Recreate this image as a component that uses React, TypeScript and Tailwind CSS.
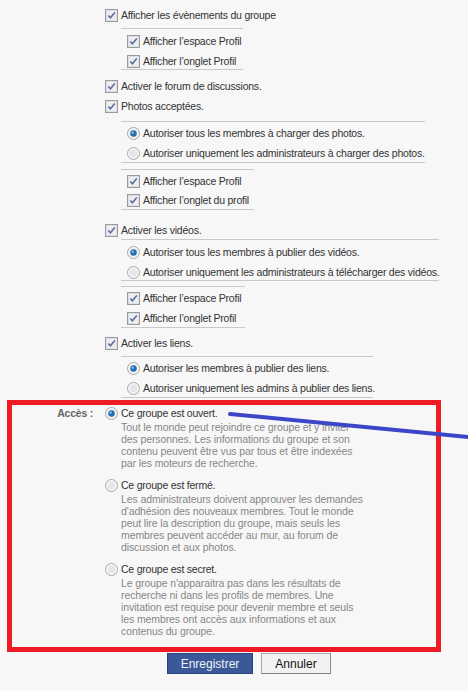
import React from 'react';

function Check() {
  return (
    <svg width="13" height="13" viewBox="0 0 13 13" className="shrink-0">
      <rect x="0.5" y="0.5" width="12" height="12" fill="#ffffff" stroke="#9a9b9c" />
      <rect x="1.5" y="1.5" width="10" height="10" fill="#eceef2" stroke="#dcdee3" />
      <path d="M3.3 6.5 L5.4 8.8 L9.8 3.5" fill="none" stroke="#5a6b96" strokeWidth="1.5" />
    </svg>
  );
}

function Radio({ on }: { on?: boolean }) {
  return (
    <svg width="13" height="13" viewBox="0 0 13 13" className="shrink-0">
      <circle cx="6.5" cy="6.5" r="6" fill="#f2f2f2" stroke="#a8a8a8" />
      <circle cx="6.5" cy="6.5" r="4.6" fill="#e6e6e6" stroke="#fbfbfb" strokeWidth="0.8" />
      {on && <circle cx="6.5" cy="6.5" r="3.2" fill="#2470b3" />}
      {on && <circle cx="5.7" cy="5.7" r="1.1" fill="#95ccf2" />}
    </svg>
  );
}

function Row({ radio, on, label, pad }: { radio?: boolean; on?: boolean; label: string; pad?: boolean }) {
  return (
    <div className={pad ? 'flex items-center gap-[3px] h-[16px] pl-[6px] pt-[1px]' : 'flex items-center gap-[3px] h-[16px] pt-[1px]'}>
      {radio ? <Radio on={on} /> : <Check />}
      <span className="whitespace-nowrap">{label}</span>
    </div>
  );
}

function Option({ on, title, lines, className }: { on?: boolean; title: string; lines: string[]; className?: string }) {
  return (
    <div className={className}>
      <div className="flex items-center gap-[3px] h-[16px] pt-[1px]">
        <Radio on={on} />
        <span className="whitespace-nowrap text-[#333333]">{title}</span>
      </div>
      <div className="pl-[16px] leading-[12px] text-[#878787] whitespace-nowrap tracking-[-0.1px]">
        {lines.map((l) => (
          <div key={l}>{l}</div>
        ))}
      </div>
    </div>
  );
}

export default function App() {
  return (
    <div className="relative w-[468px] h-[691px] bg-[#f7f7f7] overflow-hidden font-['Liberation_Sans',Arial,sans-serif] text-[10.5px] tracking-[-0.22px] text-[#333333]">
      <div className="pt-[7px]">
        <div className="pl-[105px] flex flex-col">
          <Row label="Afficher les évènements du groupe" />
          <div className="mt-[5px] ml-4 w-[122px] border-y border-[#c9c9c9] pt-[4px] flex flex-col gap-[4px]">
            <Row pad label="Afficher l’espace Profil" />
            <Row pad label="Afficher l’onglet Profil" />
          </div>
          <div className="mt-[8px]">
            <Row label="Activer le forum de discussions." />
          </div>
          <div className="mt-[4px]">
            <Row label="Photos acceptées." />
          </div>
          <div className="mt-[7px] ml-4 w-[304px] border-y border-[#c9c9c9] pt-[3px] pb-[1px] flex flex-col gap-[4px]">
            <Row pad radio on label="Autoriser tous les membres à charger des photos." />
            <Row pad radio label="Autoriser uniquement les administrateurs à charger des photos." />
          </div>
          <div className="mt-[6px] ml-4 w-[133px] border-y border-[#c9c9c9] pt-[3px] pb-[1px] flex flex-col gap-[3px]">
            <Row pad label="Afficher l’espace Profil" />
            <Row pad label="Afficher l’onglet du profil" />
          </div>
          <div className="mt-[12px]">
            <Row label="Activer les vidéos." />
          </div>
          <div className="mt-[1px] ml-4 w-[318px] border-y border-[#c9c9c9] pt-[4px] flex flex-col gap-[4px]">
            <Row pad radio on label="Autoriser tous les membres à publier des vidéos." />
            <Row pad radio label="Autoriser uniquement les administrateurs à télécharger des vidéos." />
          </div>
          <div className="mt-[5px] ml-4 w-[124px] border-y border-[#c9c9c9] pt-[3px] pb-[1px] flex flex-col gap-[4px]">
            <Row pad label="Afficher l’espace Profil" />
            <Row pad label="Afficher l’onglet Profil" />
          </div>
          <div className="mt-[7px]">
            <Row label="Activer les liens." />
          </div>
          <div className="mt-[5px] ml-4 w-[252px] border-y border-[#c9c9c9] pt-[3px] pb-[1px] flex flex-col gap-[4px]">
            <Row pad radio on label="Autoriser les membres à publier des liens." />
            <Row pad radio label="Autoriser uniquement les admins à publier des liens." />
          </div>
        </div>

        <div className="mt-[2px] ml-[7px] w-[434px] border-[5px] border-[#ed1c24] pb-[10px] flex">
          <div className="w-[81px] h-[16px] pt-[1px] flex items-center justify-end font-bold text-[#666666] whitespace-nowrap">
            Accès :
          </div>
          <div className="ml-[12px] flex flex-col gap-[8px]">
            <Option
              on
              title="Ce groupe est ouvert."
              lines={[
                'Tout le monde peut rejoindre ce groupe et y inviter',
                'des personnes. Les informations du groupe et son',
                'contenu peuvent être vus par tous et être indexées',
                'par les moteurs de recherche.',
              ]}
            />
            <Option
              title="Ce groupe est fermé."
              lines={[
                'Les administrateurs doivent approuver les demandes',
                "d'adhésion des nouveaux membres. Tout le monde",
                'peut lire la description du groupe, mais seuls les',
                'membres peuvent accéder au mur, au forum de',
                'discussion et aux photos.',
              ]}
            />
            <Option
              title="Ce groupe est secret."
              lines={[
                "Le groupe n'apparaitra pas dans les résultats de",
                'recherche ni dans les profils de membres. Une',
                'invitation est requise pour devenir membre et seuls',
                'les membres ont accès aux informations et aux',
                'contenus du groupe.',
              ]}
            />
          </div>
        </div>

        <div className="mt-[1px] ml-[167px] flex gap-[8px] text-[12px] tracking-normal">
          <button className="w-[86px] h-[21px] bg-[#3b5998] border border-[#29447e] text-[#eef1f8] flex items-center justify-center">
            Enregistrer
          </button>
          <button className="w-[70px] h-[21px] bg-[#f2f2f2] border border-[#a8a8a8] border-b-[#7f7f7f] border-r-[#8f8f8f] text-[#111111] flex items-center justify-center">
            Annuler
          </button>
        </div>
      </div>

      <svg className="absolute inset-0 pointer-events-none" width="468" height="691">
        <line x1="230" y1="414" x2="472" y2="437.5" stroke="#3c46c6" strokeWidth="4" strokeLinecap="round" />
      </svg>
    </div>
  );
}
